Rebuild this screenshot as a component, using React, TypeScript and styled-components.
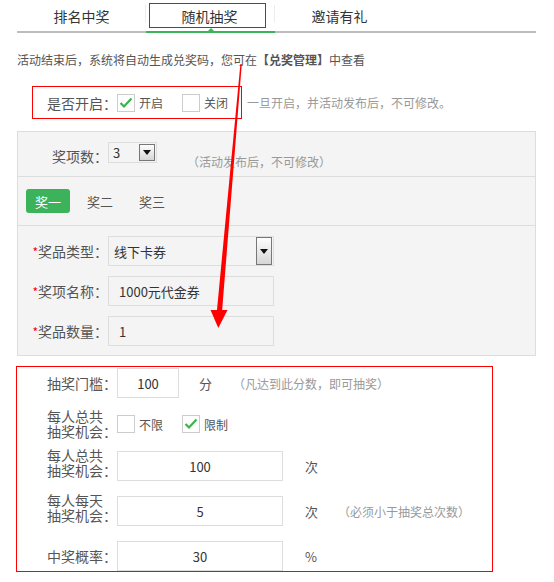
import styled, { createGlobalStyle } from 'styled-components';

const GlobalStyle = createGlobalStyle`
  body {
    margin: 0;
    background: #fff;
    font-family: "Noto Sans CJK SC", "Noto Sans", sans-serif;
  }
  * { box-sizing: border-box; }
`;

const CheckBox = ({ checked }: { checked?: boolean }) => (
  <Box>
    {checked && (
      <svg width="16" height="16" viewBox="0 0 16 16">
        <polyline points="2.5,8 6,11.5 13.5,3.5" fill="none" stroke="#3bb34b" strokeWidth="2.2" />
      </svg>
    )}
  </Box>
);

const DropButton = ({ $h }: { $h: number }) => (
  <DropBtn $h={$h}>
    <svg width="8" height="5" viewBox="0 0 8 5">
      <polygon points="0,0 8,0 4,5" fill="#111" />
    </svg>
  </DropBtn>
);

const App = () => {
  return (
    <Page>
      <GlobalStyle />
      <TabBar>
        <Tab>排名中奖</Tab>
        <Tab $active>
          <Highlight>随机抽奖</Highlight>
        </Tab>
        <Tab>邀请有礼</Tab>
      </TabBar>

      <Info>
        活动结束后，系统将自动生成兑奖码，您可在<b>【兑奖管理】</b>中查看
      </Info>

      <SwitchRow>
        <SwitchBox>
          <SwitchLabel>是否开启：</SwitchLabel>
          <Option>
            <CheckBox checked />
            开启
          </Option>
          <Option $offset={19}>
            <CheckBox />
            关闭
          </Option>
        </SwitchBox>
        <SwitchHint>一旦开启，并活动发布后，不可修改。</SwitchHint>
      </SwitchRow>

      <Panel>
        <CountRow>
          <FieldLabel $top={4}>奖项数：</FieldLabel>
          <MiniSelect>
            3
            <DropButton $h={17} />
          </MiniSelect>
          <CountHint>（活动发布后，不可修改）</CountHint>
        </CountRow>

        <PrizeTabs>
          <PrizeTab $active>奖一</PrizeTab>
          <PrizeTab>奖二</PrizeTab>
          <PrizeTab>奖三</PrizeTab>
        </PrizeTabs>

        <Form>
          <FormRow>
            <FieldLabel>
              <Star>*</Star>奖品类型：
            </FieldLabel>
            <WideSelect>
              线下卡券
              <DropButton $h={28} />
            </WideSelect>
          </FormRow>
          <FormRow>
            <FieldLabel>
              <Star>*</Star>奖项名称：
            </FieldLabel>
            <PanelInput value="1000元代金券" readOnly />
          </FormRow>
          <FormRow>
            <FieldLabel>
              <Star>*</Star>奖品数量：
            </FieldLabel>
            <PanelInput value="1" readOnly />
          </FormRow>
        </Form>
      </Panel>

      <LotteryBox>
        <LRow $top={0}>
          <LLabel>抽奖门槛：</LLabel>
          <LInput $w={62} value="100" readOnly />
          <Unit $gap={20}>分</Unit>
          <LHint $gap={21}>（凡达到此分数，即可抽奖）</LHint>
        </LRow>
        <LRow $top={11}>
          <LLabel>
            每人总共
            <br />
            抽奖机会：
          </LLabel>
          <Option>
            <CheckBox />
            不限
          </Option>
          <Option $offset={19}>
            <CheckBox checked />
            限制
          </Option>
        </LRow>
        <LRow $top={12}>
          <LLabel $raise>
            每人总共
            <br />
            抽奖机会：
          </LLabel>
          <LInput $w={166} value="100" readOnly />
          <Unit $gap={22}>次</Unit>
        </LRow>
        <LRow $top={15}>
          <LLabel $raise>
            每人每天
            <br />
            抽奖机会：
          </LLabel>
          <LInput $w={166} value="5" readOnly />
          <Unit $gap={22}>次</Unit>
          <LHint $gap={20}>（必须小于抽奖总次数）</LHint>
        </LRow>
        <LRow $top={15}>
          <LLabel>中奖概率：</LLabel>
          <LInput $w={166} value="30" readOnly />
          <Unit $gap={22}>%</Unit>
        </LRow>
      </LotteryBox>

      <ArrowLayer width="554" height="582" viewBox="0 0 554 582">
        <polygon points="240.4,64 241.8,64 222,312 216.8,312" fill="#f00" />
        <polygon points="210.5,310 227.5,310 218.3,328" fill="#f00" />
      </ArrowLayer>
    </Page>
  );
};

export default App;

const Page = styled.div`
  position: relative;
  width: 554px;
  height: 582px;
  overflow: hidden;
  color: #555;
`;

const TabBar = styled.div`
  display: flex;
  margin-left: 17px;
  width: 519px;
  height: 33px;
  border-bottom: 2px solid #bdbdbd;
`;

const Tab = styled.div<{ $active?: boolean }>`
  position: relative;
  width: 129px;
  display: flex;
  align-items: center;
  justify-content: center;
  margin-bottom: -2px;
  border-bottom: 2px solid ${(p) => (p.$active ? '#3cb35a' : 'transparent')};
  font-size: 14px;
  color: #333;

  &:not(:last-child)::after {
    content: '';
    position: absolute;
    right: 0;
    top: 5px;
    width: 1px;
    height: 17px;
    background: #ececec;
  }

  ${(p) =>
    p.$active &&
    `
    &::before {
      content: '';
      position: absolute;
      left: 62px;
      bottom: 0;
      border: 3px solid transparent;
      border-bottom: 3px solid #3cb35a;
    }
  `}
`;

const Highlight = styled.span`
  display: flex;
  align-items: center;
  justify-content: center;
  width: 117px;
  height: 25px;
  margin-right: 6px;
  padding-left: 4px;
  border: 1px solid #f00;
`;

const Info = styled.div`
  margin: 18px 0 0 17px;
  font-size: 12px;
  line-height: 18px;
  color: #555;

  b {
    font-weight: bold;
    color: #555;
  }
`;

const SwitchRow = styled.div`
  display: flex;
  align-items: center;
  margin: 17px 0 0 32px;
`;

const SwitchBox = styled.div`
  display: flex;
  align-items: center;
  width: 210px;
  height: 33px;
  padding-left: 14px;
  border: 1px solid #f00;
`;

const SwitchLabel = styled.span`
  width: 70px;
  font-size: 14px;
  color: #555;
  white-space: nowrap;
`;

const Option = styled.label<{ $offset?: number }>`
  display: flex;
  align-items: center;
  gap: 4px;
  margin-left: ${(p) => p.$offset ?? 0}px;
  font-size: 12px;
  color: #555;
`;

const Box = styled.span`
  display: flex;
  align-items: center;
  justify-content: center;
  width: 18px;
  height: 18px;
  border: 1px solid #ccc;
  background: #fff;
`;

const SwitchHint = styled.span`
  margin-left: 5px;
  font-size: 12px;
  color: #999;
`;

const Panel = styled.div`
  margin: 12px 0 0 17px;
  width: 519px;
  border: 1px solid #ddd;
  background: #f4f4f4;
`;

const CountRow = styled.div`
  display: flex;
  align-items: flex-start;
  height: 45px;
  padding-top: 10px;
  border-bottom: 1px solid #ddd;
`;

const FieldLabel = styled.span<{ $top?: number }>`
  width: 90px;
  margin-top: ${(p) => p.$top ?? 0}px;
  text-align: right;
  font-size: 14px;
  line-height: 20px;
  color: #555;
  white-space: nowrap;
`;

const Star = styled.span`
  color: #f00;
  font-size: 12px;
`;

const MiniSelect = styled.div`
  display: flex;
  align-items: center;
  justify-content: space-between;
  width: 49px;
  height: 21px;
  padding-left: 4px;
  border: 1px solid #ddd;
  font-size: 13px;
  color: #333;
`;

const DropBtn = styled.span<{ $h: number }>`
  display: flex;
  align-items: center;
  justify-content: center;
  width: 16px;
  height: ${(p) => p.$h}px;
  margin-right: 1px;
  border: 1px solid #777;
  background: linear-gradient(#fdfdfd, #d6d6d6);
`;

const CountHint = styled.span`
  margin: 11px 0 0 30px;
  font-size: 12px;
  line-height: 18px;
  color: #999;
`;

const PrizeTabs = styled.div`
  display: flex;
  gap: 8px;
  height: 49px;
  padding: 12px 0 0 8px;
  border-bottom: 1px solid #ddd;
`;

const PrizeTab = styled.div<{ $active?: boolean }>`
  display: flex;
  align-items: center;
  justify-content: center;
  width: 44px;
  height: 24px;
  border-radius: 3px;
  font-size: 13px;
  background: ${(p) => (p.$active ? '#3cb35a' : 'transparent')};
  color: ${(p) => (p.$active ? '#fff' : '#555')};
`;

const Form = styled.div`
  display: flex;
  flex-direction: column;
  gap: 10px;
  padding: 10px 0 9px;
`;

const FormRow = styled.div`
  display: flex;
  align-items: center;
  height: 30px;
`;

const WideSelect = styled.div`
  display: flex;
  align-items: center;
  justify-content: space-between;
  width: 166px;
  height: 30px;
  padding-left: 5px;
  border: 1px solid #ddd;
  font-size: 13px;
  color: #333;
`;

const PanelInput = styled.input`
  width: 166px;
  height: 30px;
  padding: 0 0 0 10px;
  border: 1px solid #ddd;
  background: transparent;
  font-family: inherit;
  font-size: 13px;
  color: #333;
  outline: none;
`;

const LotteryBox = styled.div`
  display: flex;
  flex-direction: column;
  margin: 10px 0 0 16px;
  width: 477px;
  height: 206px;
  padding: 1px 0 0 30px;
  border: 1px solid #f00;
`;

const LRow = styled.div<{ $top: number }>`
  display: flex;
  align-items: center;
  height: 30px;
  margin-top: ${(p) => p.$top}px;
`;

const LLabel = styled.span<{ $raise?: boolean }>`
  width: 70px;
  margin-bottom: ${(p) => (p.$raise ? 6 : 0)}px;
  font-size: 14px;
  line-height: 15px;
  color: #555;
  white-space: nowrap;
`;

const LInput = styled.input<{ $w: number }>`
  width: ${(p) => p.$w}px;
  height: 30px;
  padding: 0;
  border: 1px solid #ddd;
  background: #fff;
  text-align: center;
  font-family: inherit;
  font-size: 13px;
  color: #333;
  outline: none;
`;

const Unit = styled.span<{ $gap: number }>`
  margin-left: ${(p) => p.$gap}px;
  font-size: 13px;
  color: #555;
`;

const LHint = styled.span<{ $gap: number }>`
  margin-left: ${(p) => p.$gap}px;
  font-size: 12px;
  color: #999;
`;

const ArrowLayer = styled.svg`
  position: absolute;
  top: 0;
  left: 0;
  pointer-events: none;
`;
